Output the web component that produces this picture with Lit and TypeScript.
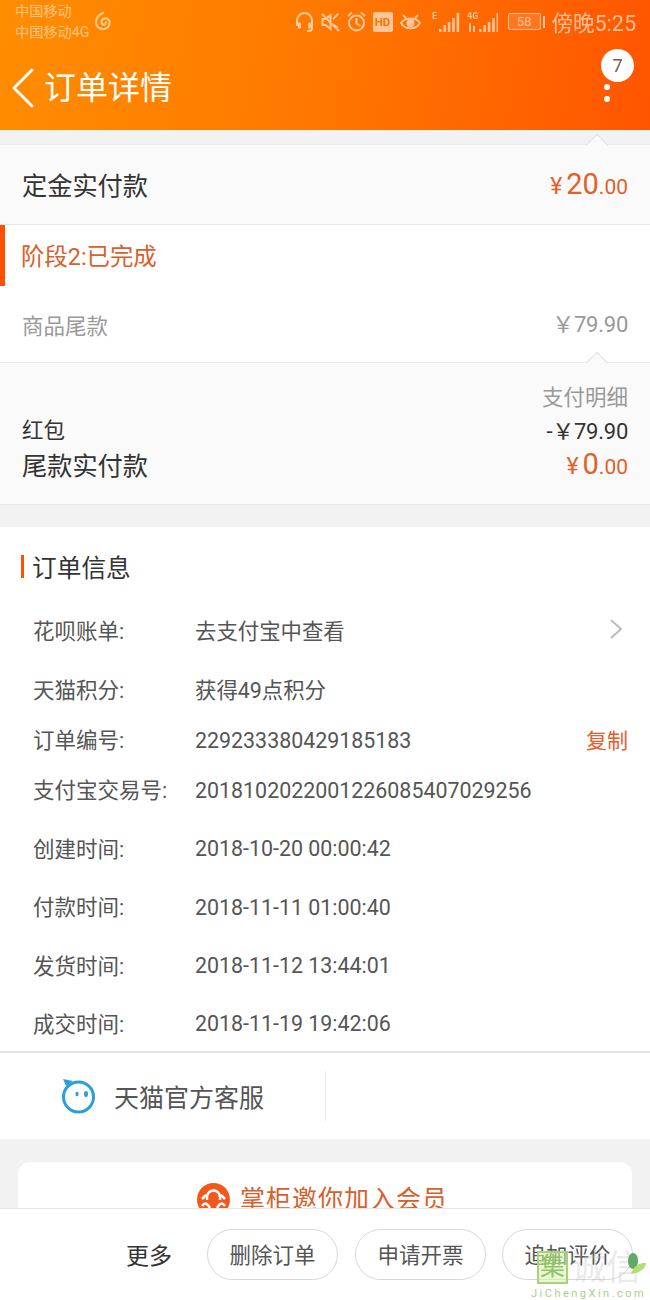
import { LitElement, html, css, svg } from "lit";
import { customElement } from "lit/decorators.js";

const rows = [
  { k: "花呗账单:", v: "去支付宝中查看", h: 59, chev: true },
  { k: "天猫积分:", v: "获得49点积分", h: 59 },
  { k: "订单编号:", v: "229233380429185183", h: 41, copy: true, num: true },
  { k: "支付宝交易号:", v: "2018102022001226085407029256", h: 59, num: true },
  { k: "创建时间:", v: "2018-10-20 00:00:42", h: 58, num: true },
  { k: "付款时间:", v: "2018-11-11 01:00:40", h: 59, num: true },
  { k: "发货时间:", v: "2018-11-12 13:44:01", h: 58, num: true },
  { k: "成交时间:", v: "2018-11-19 19:42:06", h: 58, num: true },
];

const bars = (hs: number[]) => hs.map((h, i) => svg`<rect x=${i * 4.4} y=${20 - h} width="2.6" height=${h}/>`);

@customElement("app-root")
export class AppRoot extends LitElement {
  static styles = css`
    :host { display: flex; flex-direction: column; width: 650px; height: 1300px; overflow: hidden; position: relative; background: #f2f2f2;
      font-family: Roboto, "Noto Sans CJK SC", sans-serif; color: #333; }
    .header { height: 130px; flex: none; background: linear-gradient(100deg, #ff8d00 0%, #ff7a00 45%, #ff5500 100%); display: flex; flex-direction: column; color: #fff; }
    .status { height: 44px; display: flex; align-items: center; padding: 0 14px 0 15px; color: #ffffff; }
    .carrier { font-size: 14.2px; line-height: 21px; opacity: .5; margin-top: -1px; white-space: nowrap; }
    .netease { margin: -2px 0 0 5px; opacity: .55; }
    .st-right { margin-left: auto; display: flex; align-items: center; gap: 7px; opacity: .6; margin-top: -1px; }
    .time { font-size: 21.5px; margin-left: 0; white-space: nowrap; }
    .hd { width: 20px; height: 20px; background: #fff; color: #ff7500; font-size: 11.5px; font-weight: 700; border-radius: 2px; display: flex; align-items: center; justify-content: center; }
    .sig { margin-left: 4px; }
    .batt { width: 33px; height: 17px; margin-left: 3px; border: 1px solid #fff; box-sizing: border-box; display: flex; align-items: center; justify-content: center; font-size: 13px; border-radius: 2px; background: rgba(255,255,255,.22); }
    .tip { width: 2px; height: 12px; background: #fff; margin-left: -5px; }
    .nav { flex: 1; display: flex; align-items: flex-start; padding: 23px 0 0 11px; position: relative; }
    .nav h1 { margin: 0 0 0 9px; font-size: 32px; font-weight: 400; line-height: 42px; white-space: nowrap; }
    .more { margin-left: auto; margin-right: 40px; margin-top: 17px; display: flex; flex-direction: column; gap: 6px; }
    .more i { width: 6px; height: 6px; border-radius: 50%; background: #fff; display: block; }
    .badge { position: absolute; left: 601px; top: 5px; width: 33px; height: 33px; border-radius: 50%; background: #fff; color: #7a5a50; font-size: 18px; display: flex; align-items: center; justify-content: center; }

    .main { flex: 1; min-height: 0; overflow: hidden; }
    .white { background: #fff; }
    .panel { background: #fafafa; border-top: 1px solid #ececec; border-bottom: 1px solid #e8e8e8; position: relative; box-sizing: border-box; }
    .caret { position: absolute; left: 589px; top: -8px; width: 15px; height: 15px; transform: rotate(45deg); border-left: 1px solid #e0e0e0; border-top: 1px solid #e0e0e0; background: #fafafa; }
    .p1 { height: 81px; margin-top: 14px; display: flex; align-items: center; justify-content: space-between; padding: 0 22px 2px; }
    .big { font-size: 25.2px; color: #333; white-space: nowrap; }
    .price { color: #e4602a; display: flex; align-items: baseline; }
    .price .y { font-size: 23px; margin-right: 4px; }
    .price .n { font-size: 29px; }
    .price .d { font-size: 21px; }
    .stage { height: 137px; box-sizing: border-box; }
    .stage-title { height: 61px; box-sizing: border-box; border-left: 5px solid #ff5000; padding-left: 16px; display: flex; align-items: center; font-size: 23.4px; color: #d9602a; padding-bottom: 2px; }
    .line { display: flex; justify-content: space-between; padding: 0 22px; align-items: center; }
    .goods { height: 46px; margin-top: 15px; color: #999; font-size: 21.5px; }
    .goods b, .red b { font-weight: 400; font-size: 22px; letter-spacing: -.25px; }
    .goods b { margin-top: -4px; }
    .p2 { height: 143px; padding-top: 20px; }
    .detail { text-align: right; padding-right: 22px; color: #999; font-size: 21.5px; line-height: 30px; }
    .red { height: 30px; font-size: 21.5px; margin-top: 2px; color: #333; }
    .red span { margin-top: -3px; }
    .red b { margin-top: -3px; }
    .p2 .total { height: 42px; margin-top: -2px; }
    .gap1 { height: 22px; }
    .info { padding-top: 20px; height: 526px; box-sizing: border-box; border-bottom: 2px solid #e4e4e4; }
    .h2 { display: flex; align-items: center; height: 40px; margin-left: 21px; font-size: 24.7px; color: #333; margin-top: -1px; margin-bottom: 1px; }
    .h2::before { content: ""; width: 3px; height: 23px; background: #ff5000; margin-right: 8px; }
    .rows { margin-top: 14px; }
    .row { display: flex; align-items: center; padding: 0 22px 0 33px; font-size: 21px; color: #555; }
    .row .k { width: 162px; flex: none; white-space: nowrap; font-size: 21.5px; }
    .row .v { flex: 1; color: #555; white-space: nowrap; font-size: 21.4px; }
    .row .v.num { padding-top: 3px; }
    .copy { color: #e4602a; font-size: 21px; white-space: nowrap; }
    .chev { margin-right: 5px; margin-top: -2px; }
    .service { background: #fff; height: 86px; display: flex; align-items: center; }
    .svc { width: 326px; height: 50px; box-sizing: border-box; border-right: 1px solid #ececec; display: flex; align-items: center; padding-left: 61px; font-size: 25px; color: #555; gap: 18px; white-space: nowrap; }
    .card { margin: 23px 18px 0; background: #fff; border-radius: 12px 12px 0 0; height: 80px; display: flex; justify-content: center; padding: 21px 5px 0 0; box-sizing: border-box; font-size: 25px; letter-spacing: 1px; color: #d9602a; gap: 10px; line-height: 34px; white-space: nowrap; }
    .footer { flex: none; height: 92px; box-sizing: border-box; background: #fff; border-top: 1px solid #e6e6e6; display: flex; align-items: center; padding: 0 17px 0 0; justify-content: flex-end; gap: 16px; margin-top: -1px; position: relative; }
    .more-t { font-size: 23px; color: #333; margin-right: 19px; padding-bottom: 2px; }
    .btn { width: 131px; height: 51px; border: 1px solid #d8d8d8; border-radius: 26px; box-sizing: border-box; display: flex; align-items: center; justify-content: center; font-size: 21.5px; color: #555; background: #fff; padding-bottom: 2px; }
    .btn.first { margin-right: 1px; }
    .wm { position: absolute; left: 531px; top: 1250px; width: 119px; height: 50px; pointer-events: none; }
    .wm .mark { position: absolute; left: 6px; top: 1px; width: 31px; height: 33px; background: rgba(215,242,170,.55); border: 2px solid #a6d27a; box-sizing: border-box; color: #8fc468; font-size: 25px; line-height: 27px; text-align: center; overflow: hidden; }
    .wm .cn { position: absolute; left: 40px; top: 1px; font-size: 35px; line-height: 36px; color: rgba(190,190,190,.32); white-space: nowrap; }
    .wm .url { position: absolute; left: 0; top: 37px; font-size: 11px; line-height: 13px; letter-spacing: 2.5px; color: #a5d28a; white-space: nowrap; }
    .wm svg { position: absolute; left: 96px; top: 2px; }
  `;

  render() {
    return html`
      <div class="header">
        <div class="status">
          <div class="carrier">中国移动<br />中国移动4G</div>
          <svg class="netease" width="18" height="20" viewBox="0 0 18 20" fill="none" stroke="#fff" stroke-width="2.2"><path d="M10 1.5 C5 3.5 1.5 7 2 12 C2.5 16 6 18.5 10 18 C14 17.5 16.5 14 15.5 10.5 C14.5 7.5 11 6.5 9 8 C7 9.5 7 12.5 9 13.5 C11 14.5 12.5 12.5 11.5 10.5"/></svg>
          <div class="st-right">
            <svg width="19" height="22" viewBox="0 0 19 22" fill="none" stroke="#fff" stroke-width="2"><path d="M2 15 V9.5 a7.5 7.5 0 0 1 15 0 V15 M17 15 v2 a3 3 0 0 1 -3 3 h-2"/><rect x="3" y="11.5" width="3" height="6" rx="1" fill="#fff" stroke="none"/><rect x="13" y="11.5" width="3" height="6" rx="1" fill="#fff" stroke="none"/></svg>
            <svg width="19" height="22" viewBox="0 0 19 22" fill="none" stroke="#fff" stroke-width="2"><path d="M1.5 8 h3 l5 -4 v14 l-5 -4 h-3 z M1 3 L18 20 M12 8 l5 -5 M13 14 l4 3"/></svg>
            <svg width="19" height="22" viewBox="0 0 19 22" fill="none" stroke="#fff" stroke-width="2"><circle cx="9.5" cy="12" r="7.5"/><path d="M9.5 7 v5.5 l4 2.5 M1 5 l4 -3.5 M18 5 l-4 -3.5"/></svg>
            <div class="hd">HD</div>
            <svg width="21" height="20" viewBox="0 0 21 20" fill="none" stroke="#fff" stroke-width="2"><path d="M1 11 C5 5 16 5 20 11 C16 18 5 18 1 11 Z M3 3 l3 3 M18 3 l-3 3"/><circle cx="10.5" cy="11" r="3" fill="#fff"/></svg>
            <svg class="sig" width="28" height="22" viewBox="0 0 28 22" fill="#fff"><text x="0" y="8" font-size="9" font-weight="700" font-family="Roboto" fill="#fff">E</text><g transform="translate(7 1)">${bars([3, 7, 10, 14, 19])}</g></svg>
            <svg width="31" height="22" viewBox="0 0 31 22" fill="#fff"><text x="0" y="8" font-size="9" font-weight="700" font-family="Roboto" fill="#fff">4G</text><path d="M2 12 h2 v9 h-2 z M6 15 h2 v6 h-2z"/><g transform="translate(12 1)">${bars([3, 7, 10, 14, 19])}</g></svg>
            <div class="batt">58</div>
            <div class="tip"></div>
            <div class="time">傍晚5:25</div>
          </div>
        </div>
        <div class="nav">
          <svg width="24" height="40" viewBox="0 0 24 40" fill="none" stroke="#fff" stroke-width="3" stroke-linecap="round" stroke-linejoin="round" style="margin-top:1px"><path d="M21 2 L3 20 L21 38"/></svg>
          <h1>订单详情</h1>
          <div class="more"><i></i><i></i></div>
          <div class="badge">7</div>
        </div>
      </div>
      <div class="main">
        <div class="white">
          <div class="panel p1">
            <div class="caret"></div>
            <span class="big">定金实付款</span>
            <span class="price"><span class="y">¥</span><span class="n">20</span><span class="d">.00</span></span>
          </div>
          <div class="stage">
            <div class="stage-title">阶段2:已完成</div>
            <div class="line goods"><span>商品尾款</span><b>￥79.90</b></div>
          </div>
        </div>
        <div class="panel p2">
          <div class="caret"></div>
          <div class="detail">支付明细</div>
          <div class="line red"><span>红包</span><b>-￥79.90</b></div>
          <div class="line total">
            <span class="big">尾款实付款</span>
            <span class="price"><span class="y">¥</span><span class="n">0</span><span class="d">.00</span></span>
          </div>
        </div>
        <div class="gap1"></div>
        <div class="white info">
          <div class="h2">订单信息</div>
          <div class="rows">
            ${rows.map(
              (r) => html`<div class="row" style="height:${r.h}px">
                <span class="k">${r.k}</span><span class="v ${r.num ? "num" : ""}">${r.v}</span>
                ${r.copy ? html`<span class="copy">复制</span>` : ""}
                ${r.chev
                  ? html`<svg class="chev" width="14" height="22" viewBox="0 0 14 22" fill="none" stroke="#bbb" stroke-width="2"><path d="M2 2 L12 11 L2 20"/></svg>`
                  : ""}
              </div>`
            )}
          </div>
        </div>
        <div class="service">
          <div class="svc">
            <svg width="35" height="36" viewBox="0 0 35 36" fill="none"><circle cx="17.5" cy="19" r="15" stroke="#2b9fd9" stroke-width="3"/><path d="M2 1 L12 3 L5 8 Z" fill="#2b9fd9"/><ellipse cx="16" cy="16" rx="1.6" ry="2.2" fill="#2b9fd9"/><ellipse cx="25" cy="16" rx="2" ry="3" fill="#2b9fd9"/></svg>
            <span>天猫官方客服</span>
          </div>
        </div>
        <div class="card">
          <svg width="33" height="33" viewBox="0 0 33 33"><circle cx="16.5" cy="16.5" r="16.5" fill="#f0581e"/><path d="M10 17 V14 a6.5 6.5 0 0 1 13 0 V17" fill="none" stroke="#fff" stroke-width="2.5"/><path d="M5 16 L9 12 M28 16 L24 12 M5 23 C8 19 10 20 13 25 M28 23 C25 19 23 20 20 25" fill="none" stroke="#fff" stroke-width="2.5"/></svg>
          <span>掌柜邀你加入会员</span>
        </div>
      </div>
      <div class="footer">
        <span class="more-t">更多</span>
        <div class="btn first">删除订单</div>
        <div class="btn">申请开票</div>
        <div class="btn">追加评价</div>
      </div>
      <div class="wm">
        <div class="mark">集</div>
        <div class="cn">诚信</div>
        <svg width="20" height="26" viewBox="0 0 20 26"><ellipse cx="6" cy="9" rx="5" ry="8" fill="#5fa86a"/><path d="M4 22 C8 9 19 11 19 11 C19 11 19 20 4 22 Z" fill="#b4de70"/></svg>
        <div class="url">JiChengXin.com</div>
      </div>
    `;
  }
}
